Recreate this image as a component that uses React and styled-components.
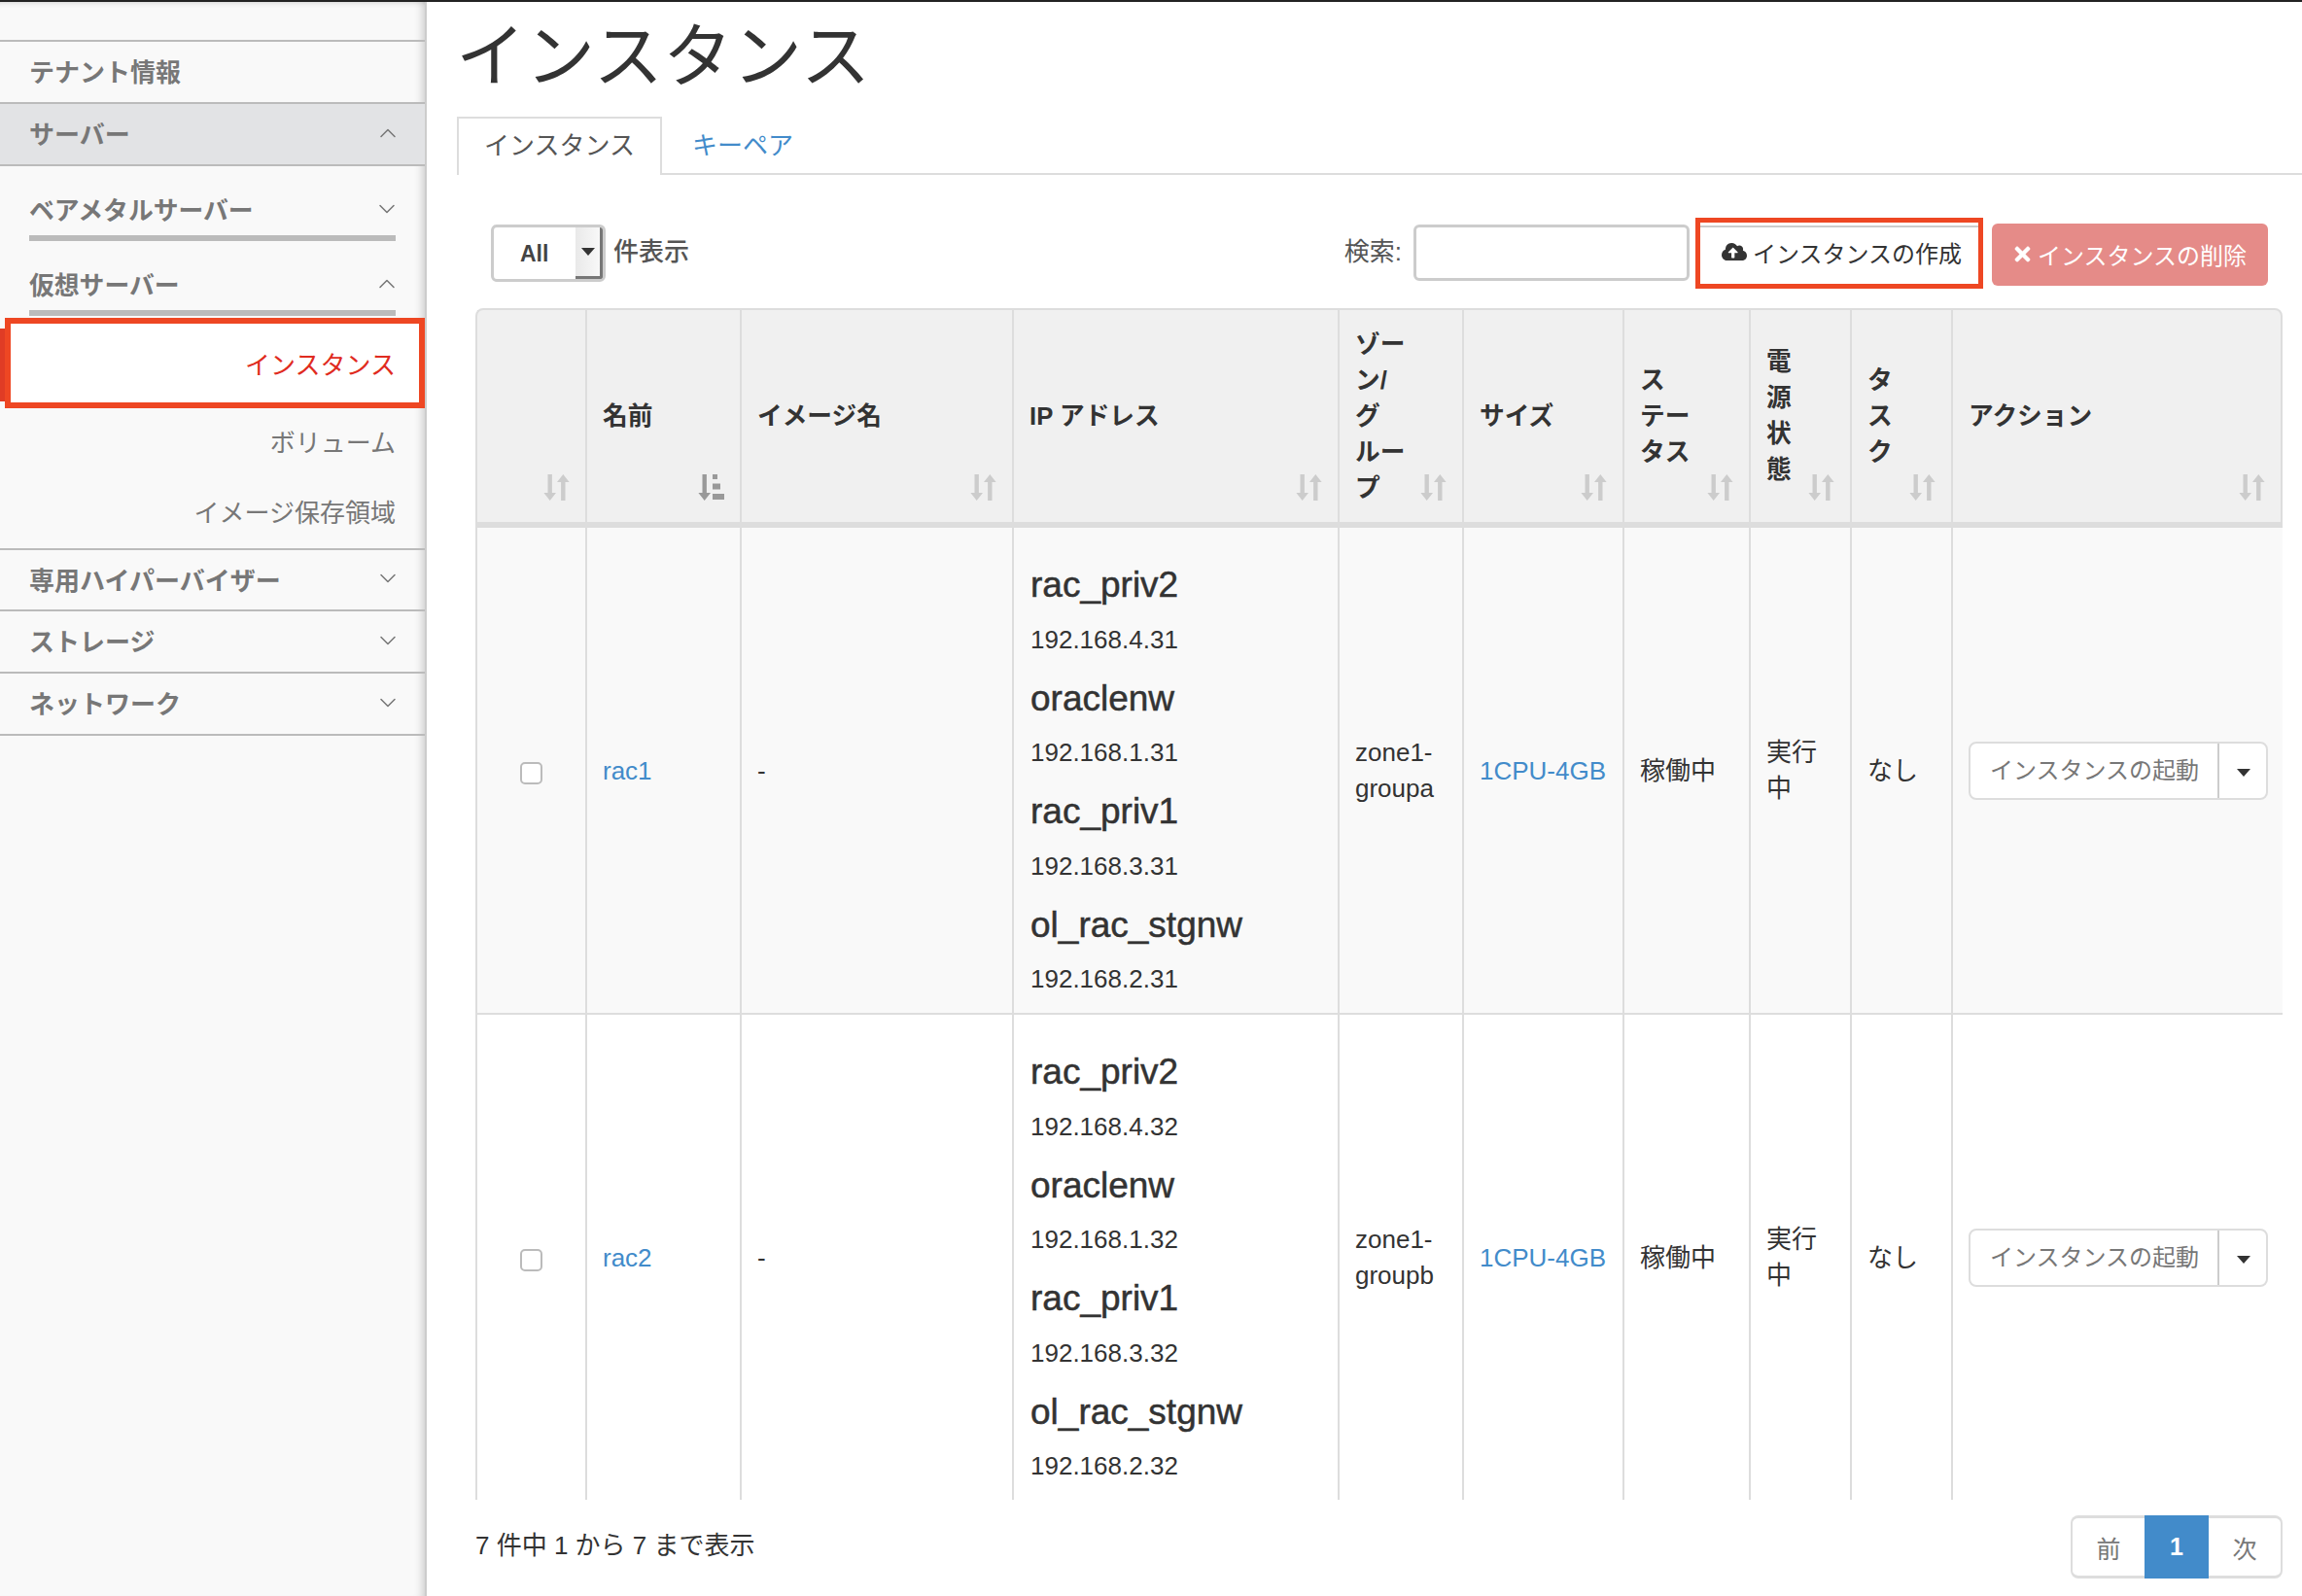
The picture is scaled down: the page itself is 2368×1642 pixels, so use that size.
import React from 'react'
import styled, { createGlobalStyle } from 'styled-components'
import { ChevronDown, ChevronUp } from 'lucide-react'
import { FaCloudUploadAlt, FaTimes } from 'react-icons/fa'

const GlobalStyle = createGlobalStyle`
  html, body { margin: 0; padding: 0; background: #fff; }
  body {
    font-family: "Liberation Sans", "Noto Sans CJK JP", sans-serif;
    font-size: 26px;
    color: #333;
  }
  * { box-sizing: border-box; }
`

const RED = '#ee4723'
const LINK = '#428bca'

// each header is split the way the narrow columns wrap it
const columns = [
  { lines: [], width: 113 },
  { lines: ['名前'], width: 159, sorted: true },
  { lines: ['イメージ名'], width: 280 },
  { lines: ['IP アドレス'], width: 335 },
  { lines: ['ゾー', 'ン/', 'グ', 'ルー', 'プ'], width: 128 },
  { lines: ['サイズ'], width: 165 },
  { lines: ['ス', 'テー', 'タス'], width: 130 },
  { lines: ['電', '源', '状', '態'], width: 104 },
  { lines: ['タ', 'ス', 'ク'], width: 104 },
  { lines: ['アクション'], width: 341 },
]

const instances = [
  { name: 'rac1', zone: 'zone1-groupa', suffix: 31 },
  { name: 'rac2', zone: 'zone1-groupb', suffix: 32 },
]

const networks = [
  { name: 'rac_priv2', net: 4 },
  { name: 'oraclenw', net: 1 },
  { name: 'rac_priv1', net: 3 },
  { name: 'ol_rac_stgnw', net: 2 },
]

const SortIcon = ({ sorted }) => (
  <SortMark viewBox="0 0 27 27">
    {sorted ? (
      <g fill="#999">
        <path d="M4.5 0h4.4v19h4.1L6.7 27 .4 19h4.1z" />
        <path d="M15 0h5v5h-5zM15 9.500h8v6h-8zM15 20h12v6H15z" />
      </g>
    ) : (
      <g fill="#ccc">
        <path d="M4.500 0h4.400v19h4.100L6.700 27 .4 19h4.100z" />
        <path d="M20.300 0l6.300 8h-4.100v19h-4.400V8H14z" />
      </g>
    )}
  </SortMark>
)

const App = () => {
  return (
    <>
      <GlobalStyle />
      <Page>
        <Sidebar>
          <MenuItem $top>テナント情報</MenuItem>
          <MenuItem $open>
            サーバー
            <ChevronUp size={28} strokeWidth={1.3} />
          </MenuItem>
          <SubMenu>
            <SubHeading>
              ベアメタルサーバー
              <ChevronDown size={28} strokeWidth={1.3} />
            </SubHeading>
            <SubHeading>
              仮想サーバー
              <ChevronUp size={28} strokeWidth={1.3} />
            </SubHeading>
          </SubMenu>
          <ActiveLink>
            <span>インスタンス</span>
          </ActiveLink>
          <SubLink>ボリューム</SubLink>
          <SubLink>イメージ保存領域</SubLink>
          <MenuItem $first>
            専用ハイパーバイザー
            <ChevronDown size={28} strokeWidth={1.3} />
          </MenuItem>
          <MenuItem>
            ストレージ
            <ChevronDown size={28} strokeWidth={1.3} />
          </MenuItem>
          <MenuItem>
            ネットワーク
            <ChevronDown size={28} strokeWidth={1.3} />
          </MenuItem>
        </Sidebar>

        <Main>
          <Title>インスタンス</Title>
          <Tabs>
            <Tab $active>インスタンス</Tab>
            <Tab>キーペア</Tab>
          </Tabs>

          <Content>
            <Toolbar>
              <SelectBox>
                <SelectValue>All</SelectValue>
                <SelectArrow><Caret /></SelectArrow>
              </SelectBox>
              <ToolbarLabel $strong>件表示</ToolbarLabel>
              <Spacer />
              <ToolbarLabel>検索:</ToolbarLabel>
              <SearchInput type="text" />
              <CreateHighlight>
                <CreateButton>
                  <FaCloudUploadAlt size={26} color="#333" />
                  <span>インスタンスの作成</span>
                </CreateButton>
              </CreateHighlight>
              <DeleteButton>
                <FaTimes size={23} />
                インスタンスの削除
              </DeleteButton>
            </Toolbar>

            <TableScroller>
              <Table>
                <colgroup>
                  {columns.map((col, i) => (
                    <col key={i} style={{ width: col.width }} />
                  ))}
                </colgroup>
                <thead>
                  <tr>
                    {columns.map((col, i) => (
                      <HeadCell key={i}>
                        {col.lines.map((line) => (
                          <HeadLine key={line}>{line}</HeadLine>
                        ))}
                        <SortIcon sorted={col.sorted} />
                      </HeadCell>
                    ))}
                  </tr>
                </thead>
                <tbody>
                  {instances.map((inst, i) => (
                    <tr key={inst.name}>
                      <Cell $odd={i % 2 === 0} $center>
                        <RowCheck type="checkbox" />
                      </Cell>
                      <Cell $odd={i % 2 === 0}><TableLink>{inst.name}</TableLink></Cell>
                      <Cell $odd={i % 2 === 0}>-</Cell>
                      <Cell $odd={i % 2 === 0}>
                        {networks.map((n) => (
                          <React.Fragment key={n.name}>
                            <NetName>{n.name}</NetName>
                            <NetAddress>192.168.{n.net}.{inst.suffix}</NetAddress>
                          </React.Fragment>
                        ))}
                      </Cell>
                      <Cell $odd={i % 2 === 0}>{inst.zone}</Cell>
                      <Cell $odd={i % 2 === 0}><TableLink>1CPU-4GB</TableLink></Cell>
                      <Cell $odd={i % 2 === 0}>稼働中</Cell>
                      <Cell $odd={i % 2 === 0}>実行中</Cell>
                      <Cell $odd={i % 2 === 0}>なし</Cell>
                      <Cell $odd={i % 2 === 0}>
                        <ActionGroup>
                          <ActionMain>インスタンスの起動</ActionMain>
                          <ActionToggle><Caret /></ActionToggle>
                        </ActionGroup>
                      </Cell>
                    </tr>
                  ))}
                </tbody>
              </Table>
            </TableScroller>

            <Footer>
              <FooterInfo>7 件中 1 から 7 まで表示</FooterInfo>
              <Pagination>
                <PageLink $first>前</PageLink>
                <PageLink $active>1</PageLink>
                <PageLink $last>次</PageLink>
              </Pagination>
            </Footer>
          </Content>
        </Main>
      </Page>
    </>
  )
}

const Page = styled.div`
  display: flex;
  width: 2368px;
  height: 1642px;
  overflow: hidden;
  border-top: 2px solid #222;
`

const Sidebar = styled.aside`
  flex: 0 0 439px;
  padding-top: 39px;
  background: #f9f9f9;
  border-right: 2px solid #ccc;
  box-shadow: inset -10px 0 10px -8px rgba(0, 0, 0, 0.2), inset 0 6px 6px -6px rgba(0, 0, 0, 0.2);
`

const MenuItem = styled.div`
  display: flex;
  align-items: center;
  justify-content: space-between;
  height: ${(p) => (p.$top ? 66 : p.$first ? 65 : 64)}px;
  padding: 0 24px 3px 30px;
  font-size: 26px;
  font-weight: 700;
  color: #777;
  border-bottom: 2px solid #bbb;
  border-top: ${(p) => (p.$top || p.$first ? '2px solid #bbb' : 'none')};
  background: ${(p) => (p.$open ? '#e2e3e5' : 'transparent')};
`

const SubMenu = styled.div`
  padding: 0 30px;
`

const SubHeading = styled.div`
  display: flex;
  align-items: center;
  justify-content: space-between;
  height: 77px;
  padding-top: 15px;
  font-size: 25.800px;
  font-weight: 700;
  color: #777;
  border-bottom: 6px solid #bbb;
  svg { margin-right: -5px; margin-top: 1px; }
`

const ActiveLink = styled.div`
  position: relative;
  display: flex;
  align-items: center;
  justify-content: flex-end;
  width: 432px;
  height: 93px;
  margin: 2px 0 0 5px;
  padding: 0 24px 0 0;
  color: #e02b20;
  background: #fff;
  border: 6px solid ${RED};
  &::before {
    content: '';
    position: absolute;
    left: -11px;
    top: 5px;
    width: 5px;
    height: 75px;
    background: #e03c25;
  }
`

const SubLink = styled.div`
  display: flex;
  align-items: center;
  justify-content: flex-end;
  height: 72px;
  padding: 0 30px 5px 0;
  color: #777;
`

const Main = styled.main`
  flex: 1;
  min-width: 0;
`

const Title = styled.h1`
  margin: 0;
  height: 118px;
  padding-left: 30px;
  font-size: 71.500px;
  font-weight: 400;
  line-height: 113px;
  color: #333;
`

const Tabs = styled.div`
  display: flex;
  height: 60px;
  margin-left: 31px;
  border-bottom: 2px solid #ddd;
`

const Tab = styled.div`
  height: ${(p) => (p.$active ? 60 : 58)}px;
  padding: 0 ${(p) => (p.$active ? 26 : 29)}px;
  line-height: 56px;
  color: ${(p) => (p.$active ? '#555' : LINK)};
  background: ${(p) => (p.$active ? '#fff' : 'transparent')};
  border: 2px solid ${(p) => (p.$active ? '#ddd' : 'transparent')};
  border-bottom: none;
`

const Content = styled.div`
  padding: 44px 20px 0 50px;
`

const Toolbar = styled.div`
  display: flex;
  align-items: center;
  height: 73px;
  margin-bottom: 20px;
  padding: 0 15px 0 16px;
`

const SelectBox = styled.div`
  display: flex;
  width: 118px;
  height: 59px;
  border: 3px solid #ccc;
  border-radius: 6px;
  overflow: hidden;
`

const SelectValue = styled.div`
  flex: 1;
  padding: 2px 0 0 27px;
  font-size: 23px;
  font-weight: 700;
  line-height: 50px;
  color: #444;
`

const SelectArrow = styled.div`
  display: flex;
  align-items: center;
  justify-content: center;
  width: 28px;
  background: linear-gradient(90deg, #e9e9e9, #f8f8f8);
  border-right: 3px solid #777;
  border-bottom: 3px solid #777;
`

const Caret = styled.span`
  display: block;
  width: 0;
  height: 0;
  border-top: 8px solid #333;
  border-left: 7px solid transparent;
  border-right: 7px solid transparent;
`

const ToolbarLabel = styled.span`
  margin: -8px 0 0 8px;
  color: #555;
  font-size: 26px;
  font-weight: ${(p) => (p.$strong ? 500 : 400)};
`

const Spacer = styled.div`
  flex: 1;
`

const SearchInput = styled.input`
  width: 284px;
  height: 58px;
  margin: -1px 0 0 12px;
  border: 3px solid #ccc;
  border-radius: 6px;
  background: #fff;
`

const CreateHighlight = styled.div`
  width: 296px;
  height: 73px;
  margin-left: 6px;
  padding-top: 3px;
  border: 5px solid ${RED};
`

const CreateButton = styled.div`
  display: flex;
  align-items: center;
  gap: 6px;
  height: 100%;
  padding: 0 0 8px 22px;
  font-size: 24px;
  color: #333;
  border-top: 2px solid #ccc;
`

const DeleteButton = styled.div`
  display: flex;
  align-items: center;
  gap: 4px;
  flex: 0 0 284px;
  height: 64px;
  margin: 2px 0 0 9px;
  padding-left: 20px;
  font-size: 24px;
  color: #fff;
  background: #e58b88;
  border-radius: 6px;
`

const TableScroller = styled.div`
  height: 1226px;
  overflow: hidden;
`

const Table = styled.table`
  width: 1859px;
  table-layout: fixed;
  border-collapse: separate;
  border-spacing: 0;
`

const HeadCell = styled.th`
  position: relative;
  height: 226px;
  padding: 16px 16px;
  font-size: 25.700px;
  font-weight: 700;
  line-height: 37px;
  text-align: left;
  color: #333;
  background: #f0f0f0;
  border-top: 2px solid #ddd;
  border-left: 2px solid #ddd;
  border-bottom: 6px solid #ddd;
  &:first-child { border-top-left-radius: 8px; }
  &:last-child { border-right: 2px solid #ddd; border-top-right-radius: 8px; }
`

const HeadLine = styled.span`
  display: block;
`

const SortMark = styled.svg`
  position: absolute;
  right: 16px;
  bottom: 22px;
  width: 27px;
  height: 27px;
`

const Cell = styled.td`
  padding: 17px 16px 16px;
  line-height: 37px;
  vertical-align: middle;
  text-align: ${(p) => (p.$center ? 'center' : 'left')};
  background: ${(p) => (p.$odd ? '#f9f9f9' : '#fff')};
  border-left: 2px solid #ddd;
  border-bottom: 2px solid #ddd;
`

const RowCheck = styled.input`
  appearance: none;
  display: block;
  width: 23px;
  height: 23px;
  margin: 4px auto 0;
  background: #fff;
  border: 2px solid #bbb;
  border-radius: 5px;
`

const TableLink = styled.a`
  color: ${LINK};
  white-space: nowrap;
`

const NetName = styled.h4`
  margin: 22px 0 17.500px 1px;
  font-size: 37px;
  font-weight: 400;
  line-height: 40px;
  color: #333;
  -webkit-text-stroke: 0.5px #333;
`

const NetAddress = styled.div`
  margin-left: 1px;
  line-height: 37px;
`

const ActionGroup = styled.div`
  display: flex;
  height: 60px;
  width: 308px;
  background: #fff;
  border: 2px solid #ddd;
  border-radius: 8px;
  color: #777;
`

const ActionMain = styled.div`
  flex: 1;
  padding-left: 20px;
  font-size: 24px;
  line-height: 55px;
  white-space: nowrap;
`

const ActionToggle = styled.div`
  display: flex;
  align-items: center;
  justify-content: center;
  width: 50px;
  padding: 4px 0 0 2px;
  border-left: 2px solid #ccc;
`

const Footer = styled.div`
  display: flex;
  align-items: center;
  justify-content: space-between;
  height: 65px;
  margin-top: 16px;
`

const FooterInfo = styled.span`
  padding-bottom: 9px;
`

const Pagination = styled.div`
  display: flex;
  height: 65px;
`

const PageLink = styled.div`
  display: flex;
  align-items: center;
  justify-content: center;
  width: ${(p) => (p.$active ? 66 : 76)}px;
  font-size: 25px;
  font-weight: ${(p) => (p.$active ? 700 : 400)};
  color: ${(p) => (p.$active ? '#fff' : '#777')};
  background: ${(p) => (p.$active ? LINK : '#fff')};
  border-top: 3px solid ${(p) => (p.$active ? LINK : '#ddd')};
  border-bottom: 3px solid ${(p) => (p.$active ? LINK : '#ddd')};
  border-left: ${(p) => (p.$first ? '2px solid #ddd' : 'none')};
  border-right: ${(p) => (p.$last ? '2px solid #ddd' : 'none')};
  border-radius: ${(p) => (p.$first ? '8px 0 0 8px' : p.$last ? '0 8px 8px 0' : '0')};
`

export default App
